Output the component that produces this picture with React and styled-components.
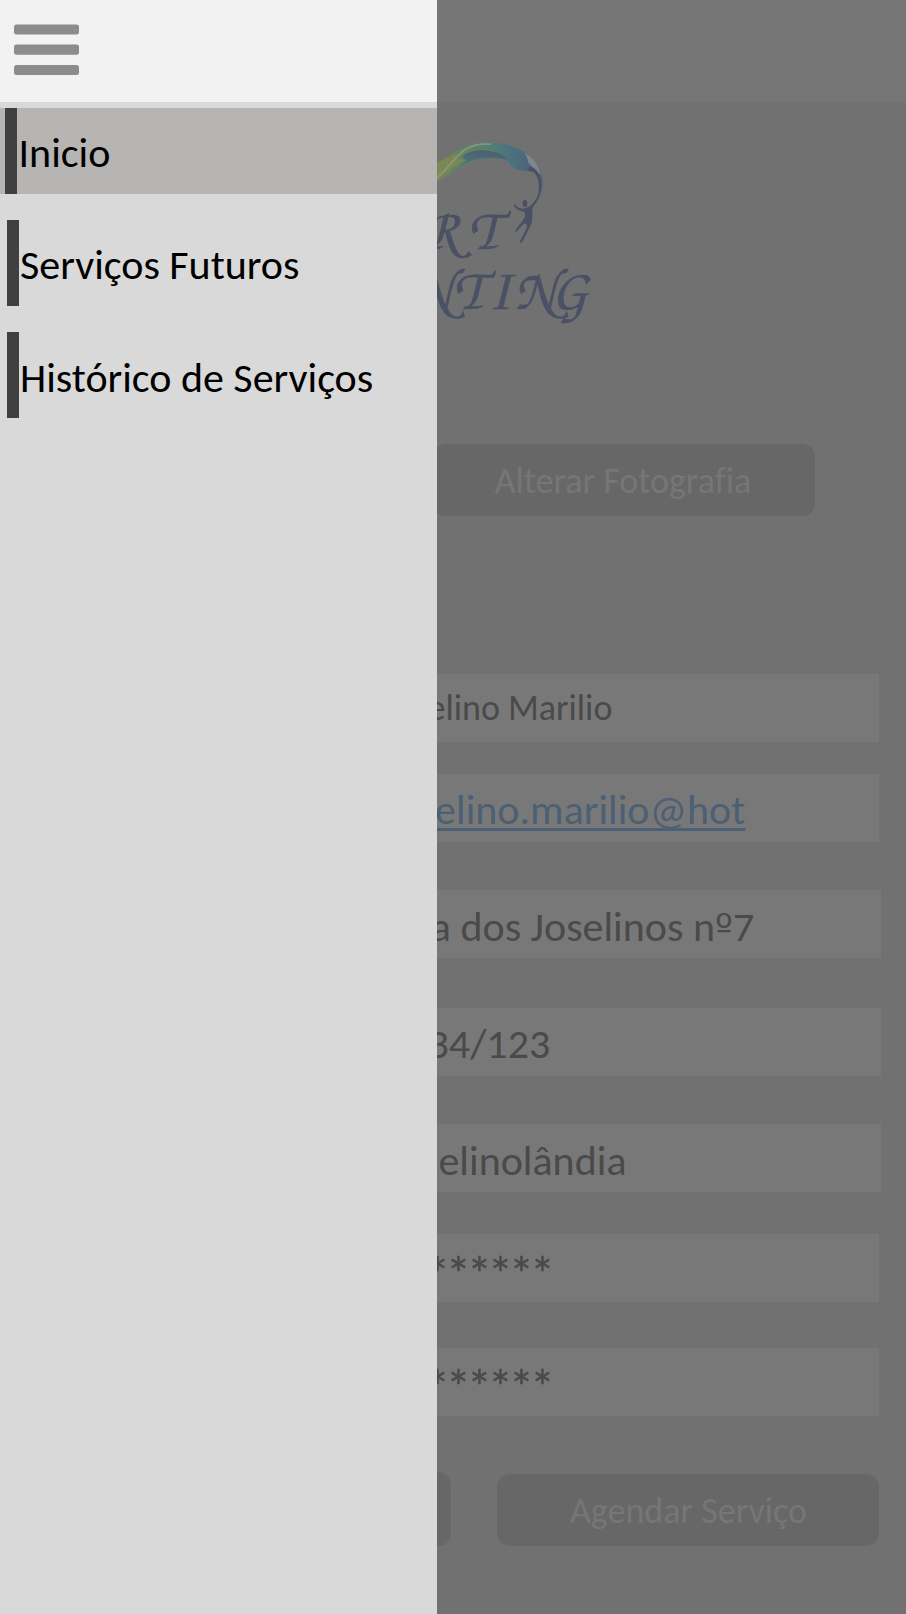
import React from "react";
import styled, { createGlobalStyle } from "styled-components";

const GlobalStyle = createGlobalStyle`
  * { box-sizing: border-box; }
  body { margin: 0; background: #717171; overflow: hidden; }
`;

const Screen = styled.div`
  position: relative;
  width: 906px;
  height: 1614px;
  overflow: hidden;
  background: #717171;
  font-family: Carlito, Calibri, Lato, sans-serif;
  font-variant-ligatures: none;
  color: #4a4a4a;
`;

const Page = styled.main`
  display: flex;
  flex-direction: column;
  align-items: flex-end;
  height: 100%;
`;

const TopBar = styled.header`
  width: 100%;
  height: 102px;
  background: #767676;
`;

const Brand = styled.div`
  width: 620px;
  height: 220px;
  margin: 18px 286px 0 0;
  display: flex;
  justify-content: flex-end;
`;

const BrandName = styled.text`
  font-family: "TeX Gyre Chorus", "Monotype Corsiva", "Apple Chancery", cursive;
  font-size: 176px;
  fill: #4b5164;
  stroke: #4b5164;
  stroke-width: 1.5px;
`;

const Button = styled.div`
  display: flex;
  align-items: center;
  justify-content: center;
  width: 382px;
  height: ${(p) => p.$height || 72}px;
  padding-top: 2px;
  padding-left: ${(p) => Math.max(p.$nudge || 0, 0)}px;
  padding-right: ${(p) => Math.max(-(p.$nudge || 0), 0)}px;
  border-radius: 13px;
  background: #676767;
  color: #767676;
  font-size: 36px;
  line-height: 44px;
`;

const PhotoRow = styled.div`
  margin: 104px 91px 158px 0;
`;

const Field = styled.div`
  display: flex;
  align-items: center;
  width: ${(p) => 504 + (p.$wide ? 2 : 0)}px;
  height: 68px;
  margin-right: ${(p) => (p.$wide ? 25 : 27)}px;
  margin-bottom: ${(p) => p.$gap}px;
  padding-left: ${(p) => p.$inset}px;
  padding-top: ${(p) => Math.max(p.$drop, 0)}px;
  padding-bottom: ${(p) => Math.max(-p.$drop, 0)}px;
  background: #787878;
  font-size: ${(p) => (p.$small ? 36 : 42)}px;
  line-height: 50px;
  white-space: nowrap;
`;

const MailLink = styled.span`
  color: #4c5f75;
  text-decoration: underline;
  text-decoration-thickness: 3px;
  text-underline-offset: 4px;
  text-decoration-skip-ink: none;
`;

const Ordinal = styled.span`
  font-family: "DejaVu Sans", sans-serif;
  font-size: 38px;
  line-height: 0;
`;

const Secret = styled.span`
  font-size: 50px;
  letter-spacing: -3.9px;
  -webkit-text-stroke: 0.4px #4a4a4a;
`;

const Actions = styled.div`
  display: flex;
  align-items: flex-end;
  gap: 46px;
  margin-right: 27px;
`;

const Drawer = styled.aside`
  position: absolute;
  top: 0;
  left: 0;
  width: 437px;
  height: 100%;
  background: #d9d9d9;
`;

const DrawerHead = styled.div`
  height: 102px;
  padding: 24px 0 0 14px;
  margin-bottom: 6px;
  background: #f2f2f2;
`;

const MenuIcon = styled.svg`
  display: block;
  width: 65px;
  height: 52px;
  fill: #8c8c8c;
`;

const Menu = styled.nav`
  display: flex;
  flex-direction: column;
  gap: 26px;
`;

const MenuItem = styled.div`
  display: flex;
  height: 86px;
  padding-left: ${(p) => (p.$active ? 5 : 7)}px;
  background: ${(p) => (p.$active ? "#b6b5b3" : "transparent")};
  color: #000;
`;

const Marker = styled.span`
  width: 12px;
  background: #404040;
`;

const MenuLabel = styled.span`
  display: flex;
  align-items: center;
  padding-left: ${(p) => p.$inset}px;
  padding-top: ${(p) => p.$drop}px;
  font-size: 42px;
  line-height: 50px;
  white-space: nowrap;
`;

const fields = [
  { content: "Joselino Marilio", small: true, inset: 8, drop: -1, gap: 32 },
  { content: <MailLink>joselino.marilio@hot</MailLink>, inset: 11.5, drop: 4, gap: 48 },
  { content: <span>Rua dos Joselinos n<Ordinal>º</Ordinal>7</span>, wide: true, inset: 11, drop: 6, gap: 50 },
  { content: "1234/123", wide: true, inset: 10, drop: 4, gap: 48 },
  { content: "Joselinolândia", wide: true, inset: 11.5, drop: 5, gap: 42 },
  { content: <Secret>********</Secret>, inset: 8, drop: 11, gap: 46 },
  { content: <Secret>********</Secret>, inset: 8, drop: 9, gap: 56 },
];

function Logo() {
  return (
    <svg width="320" height="220" viewBox="-360 0 960 660">
      <defs>
        <linearGradient id="wing" x1="0" y1="0" x2="1" y2="0">
          <stop offset="0" stopColor="#7c8953" />
          <stop offset="0.28" stopColor="#66855b" />
          <stop offset="0.52" stopColor="#53806f" />
          <stop offset="0.7" stopColor="#4b7481" />
          <stop offset="0.88" stopColor="#4c6579" />
          <stop offset="1" stopColor="#505c70" />
        </linearGradient>
        <linearGradient id="fold" x1="0.5" y1="0" x2="0.3" y2="0.7">
          <stop offset="0" stopColor="#4f5f6c" />
          <stop offset="0.35" stopColor="#4c6876" />
          <stop offset="1" stopColor="#497c83" />
        </linearGradient>
      </defs>
      <path
        d="M20 143 C75 120 105 91 145 75 C190 60 245 65 288 84 C333 99 363 143 367 180 C370 208 360 234 344 254 C361 225 363 176 339 154 C322 151 301 157 283 144 C267 134 265 119 248 117 C194 112 165 119 135 135 C104 153 80 171 20 202 Z"
        fill="url(#wing)"
      />
      <path
        d="M126 112 C143 91 181 87 213 94 C240 99 258 109 264 119 C220 111 171 112 137 131 C119 140 100 154 84 163 C103 145 126 135 139 120 Z"
        fill="url(#fold)"
      />
      <path d="M20 143 C69 126 91 107 109 104 C104 115 116 119 135 119 C98 137 74 163 42 181 Z" fill="#7c8853" />
      <path d="M35 187 C88 150 108 91 166 76 Q188 70 213 73" fill="none" stroke="#8d9789" strokeWidth="4.5" />
      <path d="M312 98 C339 110 358 137 362 167 C348 143 333 141 325 128 C324 117 320 108 312 98Z" fill="#7e8690" />
      <path
        d="M330 139 C345 145 355 155 360 176 C370 209 355 241 337 265 C338 279 337 292 336 306 C328 324 320 342 309 362 Q304 372 299 366 C305 352 316 337 320 322 C322 314 318 310 312 312 C303 319 297 327 289 336 L285 333 C293 318 306 306 314 293 C317 285 316 279 311 275 C298 274 287 268 281 255 L285 253 Q290 263 307 266 Q327 263 337 252 C355 233 361 208 355 179 C351 160 340 153 322 152 Z"
        fill="#4b5164"
      />
      <ellipse cx="315" cy="250" rx="7" ry="11" fill="#4b5164" />
      <BrandName x="-95 10 146" y="387">ART</BrandName>
      <BrandName x="-26 101 205 284 394" y="567">NTING</BrandName>
    </svg>
  );
}

export default function App() {
  return (
    <Screen>
      <GlobalStyle />
      <Page>
        <TopBar />
        <Brand>
          <Logo />
        </Brand>
        <PhotoRow>
          <Button $nudge={-2}>Alterar Fotografia</Button>
        </PhotoRow>
        {fields.map((f, i) => (
          <Field key={i} $wide={f.wide} $small={f.small} $inset={f.inset} $drop={f.drop} $gap={f.gap}>
            {f.content}
          </Field>
        ))}
        <Actions>
          <Button $height={74} />
          <Button $nudge={1}>Agendar Serviço</Button>
        </Actions>
      </Page>
      <Drawer>
        <DrawerHead>
          <MenuIcon viewBox="0 0 65 52">
            <rect y="0.5" width="65" height="10" rx="2.5" />
            <rect y="20.5" width="65" height="10.3" rx="2.5" />
            <rect y="41" width="65" height="10" rx="2.5" />
          </MenuIcon>
        </DrawerHead>
        <Menu>
          <MenuItem $active>
            <Marker />
            <MenuLabel $inset={1.5} $drop={4}>Inicio</MenuLabel>
          </MenuItem>
          <MenuItem>
            <Marker />
            <MenuLabel $inset={1} $drop={4}>Serviços Futuros</MenuLabel>
          </MenuItem>
          <MenuItem>
            <Marker />
            <MenuLabel $inset={1} $drop={6}>Histórico de Serviços</MenuLabel>
          </MenuItem>
        </Menu>
      </Drawer>
    </Screen>
  );
}
